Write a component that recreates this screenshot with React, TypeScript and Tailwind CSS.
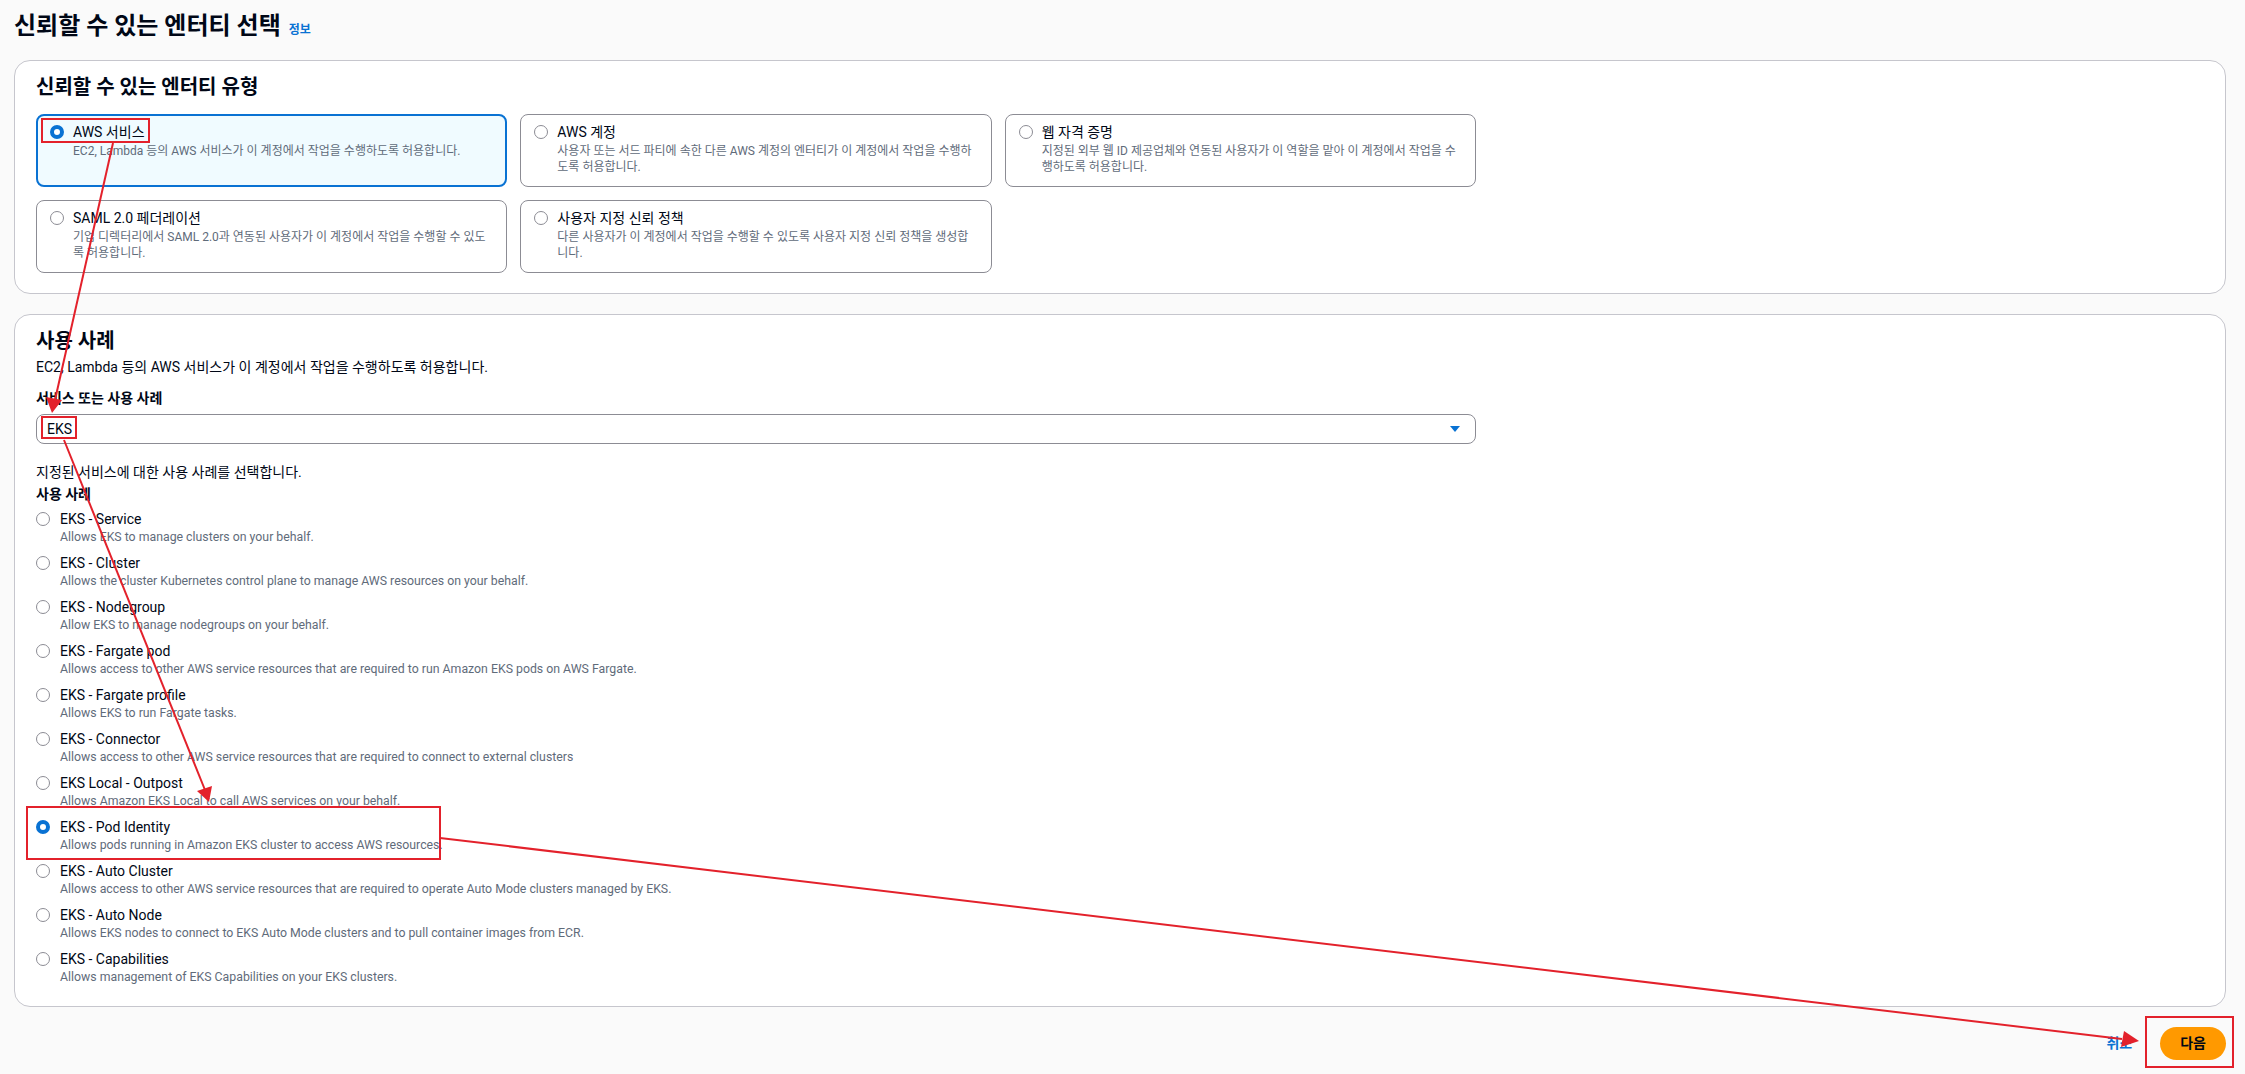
import React from 'react';

const font = "font-['Roboto','Noto_Sans_CJK_KR',sans-serif]";

type Tile = { title: string; lines: string[]; selected?: boolean };

const tiles: Tile[] = [
  { title: 'AWS 서비스', lines: ['EC2, Lambda 등의 AWS 서비스가 이 계정에서 작업을 수행하도록 허용합니다.'], selected: true },
  { title: 'AWS 계정', lines: ['사용자 또는 서드 파티에 속한 다른 AWS 계정의 엔터티가 이 계정에서 작업을 수행하', '도록 허용합니다.'] },
  { title: '웹 자격 증명', lines: ['지정된 외부 웹 ID 제공업체와 연동된 사용자가 이 역할을 맡아 이 계정에서 작업을 수', '행하도록 허용합니다.'] },
  { title: 'SAML 2.0 페더레이션', lines: ['기업 디렉터리에서 SAML 2.0과 연동된 사용자가 이 계정에서 작업을 수행할 수 있도', '록 허용합니다.'] },
  { title: '사용자 지정 신뢰 정책', lines: ['다른 사용자가 이 계정에서 작업을 수행할 수 있도록 사용자 지정 신뢰 정책을 생성합', '니다.'] },
];

const useCases = [
  ['EKS - Service', 'Allows EKS to manage clusters on your behalf.'],
  ['EKS - Cluster', 'Allows the cluster Kubernetes control plane to manage AWS resources on your behalf.'],
  ['EKS - Nodegroup', 'Allow EKS to manage nodegroups on your behalf.'],
  ['EKS - Fargate pod', 'Allows access to other AWS service resources that are required to run Amazon EKS pods on AWS Fargate.'],
  ['EKS - Fargate profile', 'Allows EKS to run Fargate tasks.'],
  ['EKS - Connector', 'Allows access to other AWS service resources that are required to connect to external clusters'],
  ['EKS Local - Outpost', 'Allows Amazon EKS Local to call AWS services on your behalf.'],
  ['EKS - Pod Identity', 'Allows pods running in Amazon EKS cluster to access AWS resources.'],
  ['EKS - Auto Cluster', 'Allows access to other AWS service resources that are required to operate Auto Mode clusters managed by EKS.'],
  ['EKS - Auto Node', 'Allows EKS nodes to connect to EKS Auto Mode clusters and to pull container images from ECR.'],
  ['EKS - Capabilities', 'Allows management of EKS Capabilities on your EKS clusters.'],
];

function Radio({ checked }: { checked?: boolean }) {
  return checked ? (
    <span className="block h-[14px] w-[14px] shrink-0 rounded-full border-[4px] border-[#0972d3] bg-white" />
  ) : (
    <span className="block h-[14px] w-[14px] shrink-0 rounded-full border-[1.5px] border-[#8c8c94] bg-white" />
  );
}

function TileCard({ tile }: { tile: Tile }) {
  return (
    <div
      className={
        tile.selected
          ? 'h-[73px] rounded-[8px] border-2 border-[#0972d3] bg-[#f0fbff] pl-[12px] pt-[6px]'
          : 'h-[73px] rounded-[8px] border border-[#8c8c94] bg-white pl-[13px] pt-[7px]'
      }
    >
      <div className="flex items-center gap-[9px] text-[14px] leading-[20px] text-[#000716]">
        <Radio checked={tile.selected} />
        <span>{tile.title}</span>
      </div>
      <div className="mt-px pl-[23px] text-[12px] leading-[16px] text-[#5f6b7a]">
        {tile.lines.map((l) => (
          <div key={l} className="whitespace-nowrap">{l}</div>
        ))}
      </div>
    </div>
  );
}

export default function App() {
  return (
    <div className={`relative min-h-screen w-full bg-[#fafafa] pb-[16px] pl-[14px] pr-[19px] pt-[10px] text-[#000716] ${font}`}>
      <div className="flex items-baseline gap-[8px]">
        <h1 className="text-[24px] font-bold leading-[32px]">신뢰할 수 있는 엔터티 선택</h1>
        <a className="text-[12px] font-bold text-[#0972d3]">정보</a>
      </div>

      <section className="mt-[18px] rounded-[16px] border border-[#c6c6cd] bg-white pb-[20px] pl-[21px] pt-[12px]">
        <h2 className="text-[20px] font-bold leading-[28px]">신뢰할 수 있는 엔터티 유형</h2>
        <div className="mt-[13px] grid w-[1440px] grid-cols-3 gap-[13px]">
          {tiles.map((t) => (
            <TileCard key={t.title} tile={t} />
          ))}
        </div>
      </section>

      <section className="mt-[20px] rounded-[16px] border border-[#c6c6cd] bg-white pb-[21px] pl-[21px] pt-[12px]">
        <h2 className="text-[20px] font-bold leading-[28px]">사용 사례</h2>
        <p className="mt-[2px] text-[14px] leading-[20px] text-[#000716]">EC2, Lambda 등의 AWS 서비스가 이 계정에서 작업을 수행하도록 허용합니다.</p>
        <div className="mt-[11px] text-[14px] font-bold leading-[20px]">서비스 또는 사용 사례</div>
        <div className="mt-[6px] flex h-[30px] w-[1440px] items-center justify-between rounded-[8px] border border-[#8c8c94] bg-white pl-[10px] pr-[14px]">
          <span className="text-[14px]">EKS</span>
          <svg width="12" height="8" viewBox="0 0 12 8">
            <path d="M1 1h10L6 7z" fill="#0972d3" />
          </svg>
        </div>
        <div className="mt-[18px] text-[14px] leading-[20px]">지정된 서비스에 대한 사용 사례를 선택합니다.</div>
        <div className="mt-[2px] text-[14px] font-bold leading-[20px]">사용 사례</div>
        <div className="mt-[5px] flex flex-col gap-[8px]">
          {useCases.map(([title, desc]) => (
            <div key={title}>
              <div className="flex items-center gap-[10px] text-[14px] leading-[20px]">
                <Radio checked={title === 'EKS - Pod Identity'} />
                <span>{title}</span>
              </div>
              <div className="pl-[24px] text-[12.3px] leading-[16px] text-[#5f6b7a]">{desc}</div>
            </div>
          ))}
        </div>
      </section>

      <div className="mt-[20px] flex items-center justify-end gap-[28px]">
        <a className="text-[14px] font-bold text-[#0972d3]">취소</a>
        <button className="h-[33px] rounded-full bg-[#ff9900] px-[20px] text-[14px] font-bold text-[#000716]">다음</button>
      </div>

      <svg className="pointer-events-none absolute left-0 top-0" width="2245" height="1074" viewBox="0 0 2245 1074">
        <g fill="none" stroke="#e3212b" strokeWidth="2">
          <rect x="42" y="119" width="107" height="23" />
          <rect x="42" y="417" width="34" height="21" />
          <rect x="27" y="807" width="413" height="52" />
          <rect x="2146" y="1017" width="87" height="50" />
          <line x1="113" y1="143" x2="55" y2="400" />
          <line x1="64" y1="440" x2="205" y2="790" />
          <line x1="440" y1="838" x2="2122" y2="1039" />
        </g>
        <g fill="#e3212b">
          <polygon points="52,413 46,397 62,400" />
          <polygon points="209,802 197,791 212,786" />
          <polygon points="2139,1041 2121,1047 2124,1031" />
        </g>
      </svg>
    </div>
  );
}
